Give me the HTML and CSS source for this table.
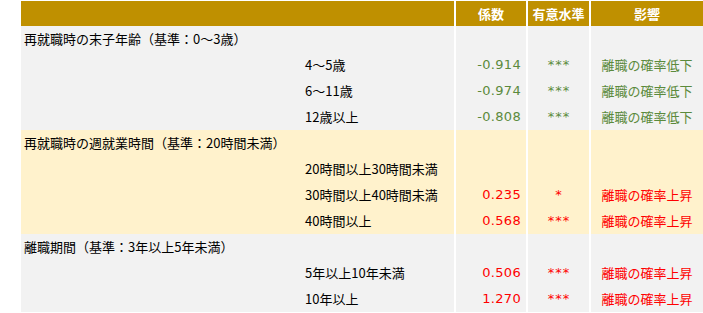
FILE: index.html
```html
<!DOCTYPE html>
<html lang="ja">
<head>
<meta charset="utf-8">
<title>再就職後の離職要因</title>
<link rel="stylesheet" href="styles.css">
</head>
<body>
<div class="wrap">
  <div class="row head">
    <div class="cell"></div>
    <div class="cell c">係数</div>
    <div class="cell c">有意水準</div>
    <div class="cell c">影響</div>
  </div>

  <div class="row grey">
    <div class="cell lab">再就職時の末子年齢（基準：0～3歳）</div>
    <div class="cell"></div><div class="cell"></div><div class="cell"></div>
  </div>
  <div class="row grey">
    <div class="cell sub">4～5歳</div>
    <div class="cell num green">-0.914</div>
    <div class="cell c star green">***</div>
    <div class="cell c green">離職の確率低下</div>
  </div>
  <div class="row grey">
    <div class="cell sub">6～11歳</div>
    <div class="cell num green">-0.974</div>
    <div class="cell c star green">***</div>
    <div class="cell c green">離職の確率低下</div>
  </div>
  <div class="row grey">
    <div class="cell sub">12歳以上</div>
    <div class="cell num green">-0.808</div>
    <div class="cell c star green">***</div>
    <div class="cell c green">離職の確率低下</div>
  </div>

  <div class="row yellow">
    <div class="cell lab">再就職時の週就業時間（基準：20時間未満）</div>
    <div class="cell"></div><div class="cell"></div><div class="cell"></div>
  </div>
  <div class="row yellow">
    <div class="cell sub">20時間以上30時間未満</div>
    <div class="cell"></div><div class="cell"></div><div class="cell"></div>
  </div>
  <div class="row yellow">
    <div class="cell sub">30時間以上40時間未満</div>
    <div class="cell num red">0.235</div>
    <div class="cell c star red">*</div>
    <div class="cell c red">離職の確率上昇</div>
  </div>
  <div class="row yellow">
    <div class="cell sub">40時間以上</div>
    <div class="cell num red">0.568</div>
    <div class="cell c star red">***</div>
    <div class="cell c red">離職の確率上昇</div>
  </div>

  <div class="row grey">
    <div class="cell lab">離職期間（基準：3年以上5年未満）</div>
    <div class="cell"></div><div class="cell"></div><div class="cell"></div>
  </div>
  <div class="row grey">
    <div class="cell sub">5年以上10年未満</div>
    <div class="cell num red">0.506</div>
    <div class="cell c star red">***</div>
    <div class="cell c red">離職の確率上昇</div>
  </div>
  <div class="row grey">
    <div class="cell sub">10年以上</div>
    <div class="cell num red">1.270</div>
    <div class="cell c star red">***</div>
    <div class="cell c red">離職の確率上昇</div>
  </div>
</div>
</body>
</html>
```
FILE: styles.css
```css
html, body {
  margin: 0;
  padding: 0;
  background: #ffffff;
  overflow: hidden;
}
body {
  font-family: "Noto Sans CJK JP", "Noto Sans", sans-serif;
  font-size: 13px;
  color: #000000;
}
.wrap {
  padding: 1px 0 0 21px;
}
.row {
  display: grid;
  grid-template-columns: 433px 70px 61px 112px;
  column-gap: 2px;
  height: 26px;
}
.cell {
  line-height: 26px;
  white-space: nowrap;
  overflow: hidden;
}
.head {
  height: 25px;
}
.head .cell {
  background: #bf9000;
  color: #ffffff;
  font-weight: bold;
  line-height: 25px;
}
.grey .cell { background: #f2f2f2; }
.yellow .cell { background: #fff2cc; }
.c { text-align: center; }
.num {
  font-family: "DejaVu Sans", "Noto Sans CJK JP", sans-serif;
  text-align: right;
  padding-right: 5px;
  letter-spacing: 0.3px;
}
.star {
  font-family: "DejaVu Sans", sans-serif;
  letter-spacing: 1px;
  padding-left: 1px;
}
.lab { padding-left: 3px; }
.sub { padding-left: 284px; }
.green { color: #5b8a3c; }
.red { color: #ff0000; }
```
